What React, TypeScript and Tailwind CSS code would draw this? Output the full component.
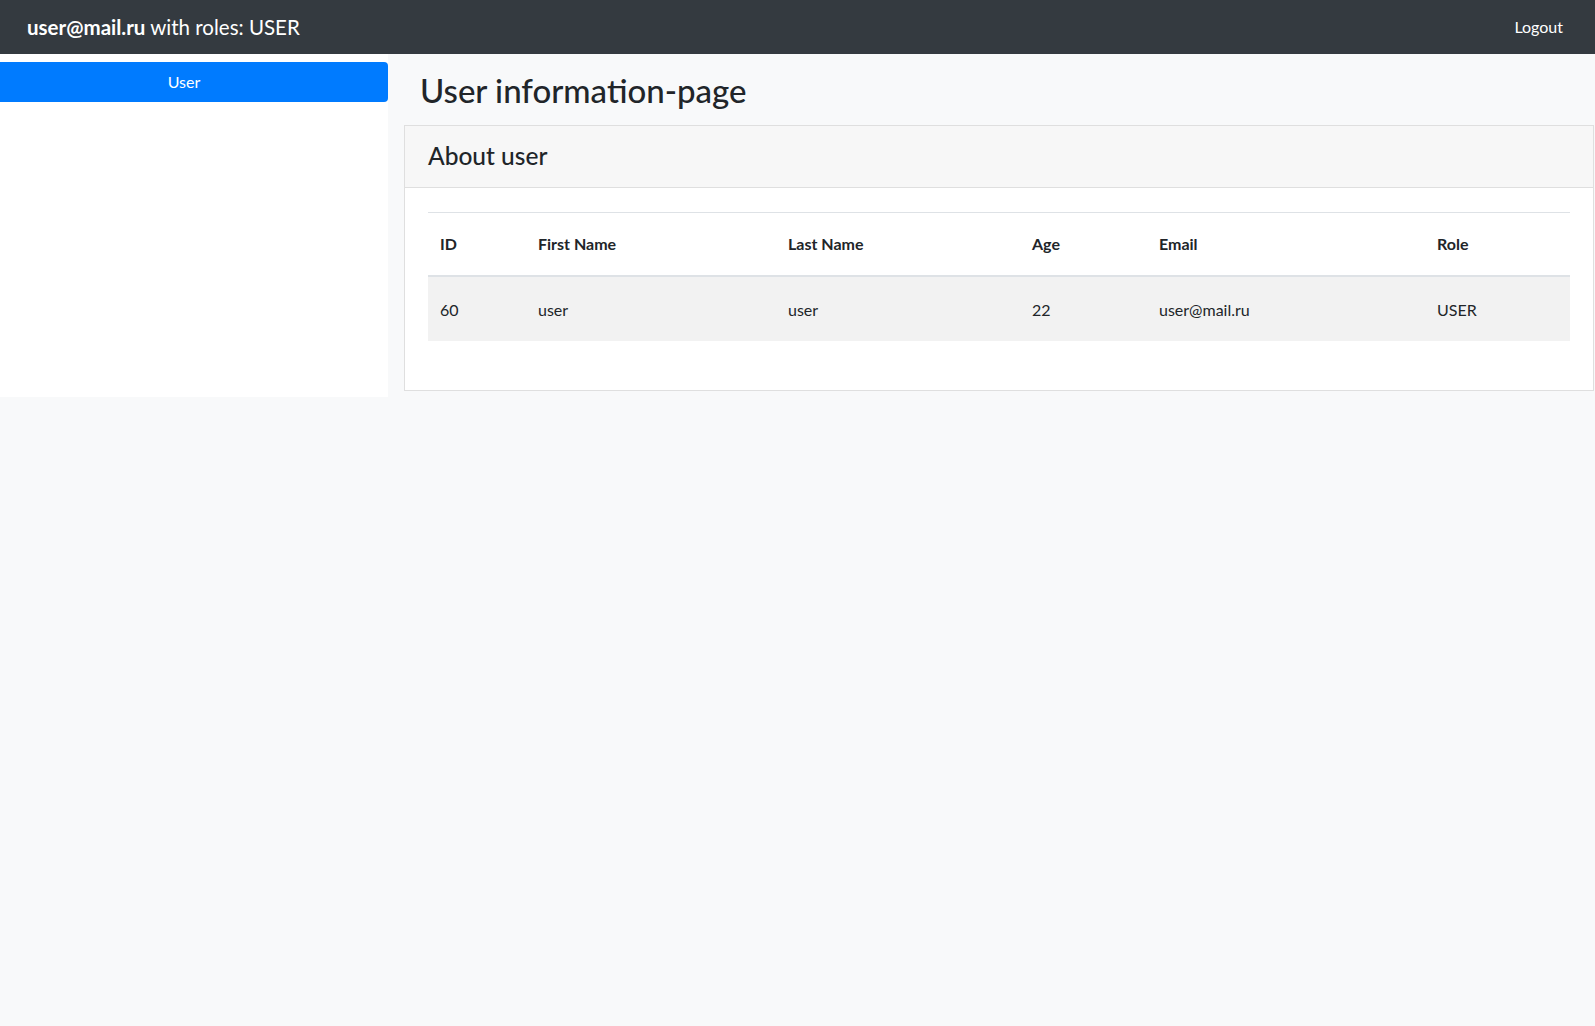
import React from 'react';

const font = { fontFamily: 'Lato, "Noto Sans", sans-serif' };

const columns = [
  { label: 'ID', width: 'w-[98px]' },
  { label: 'First Name', width: 'w-[250px]' },
  { label: 'Last Name', width: 'w-[244px]' },
  { label: 'Age', width: 'w-[127px]' },
  { label: 'Email', width: 'w-[278px]' },
  { label: 'Role', width: 'w-[145px]' },
];

const rows = [['60', 'user', 'user', '22', 'user@mail.ru', 'USER']];

export default function App() {
  return (
    <div className="min-h-screen bg-[#f8f9fa] text-[#212529]" style={font}>
      <nav className="flex h-[54px] items-center justify-between bg-[#343a40] pl-[27px] pr-[32px] text-white">
        <div className="text-[20.5px]">
          <span className="font-bold">user@mail.ru</span> with roles: USER
        </div>
        <a href="#" className="text-[16px] text-white">
          Logout
        </a>
      </nav>

      <div className="flex">
        <aside className="w-[388px] bg-white pt-2">
          <button className="flex h-10 w-full items-center justify-center rounded-r-[4px] bg-[#007bff] pr-5 text-[16px] text-white">
            User
          </button>
        </aside>

        <main className="flex-1 pl-4 pr-px pt-[17px] pb-[6px]">
          <h1 className="pl-4 text-[33px] font-medium leading-[1.2]">User information-page</h1>

          <div className="mt-[14px] border border-[#dfdfdf] bg-white">
            <div className="flex h-[62px] items-center border-b border-[#dfdfdf] bg-[#f7f7f7] px-[23px]">
              <h4 className="text-[24.5px] font-medium leading-[1.2]">About user</h4>
            </div>
            <div className="px-[23px] pt-[24px] pb-[49px]">
              <table className="w-full table-fixed border-collapse text-[16px]">
                <thead>
                  <tr className="h-[64px] border-t border-b-2 border-[#dee2e6]">
                    {columns.map((c) => (
                      <th key={c.label} className={`${c.width} px-3 text-left font-bold`}>
                        {c.label}
                      </th>
                    ))}
                  </tr>
                </thead>
                <tbody>
                  {rows.map((r, i) => (
                    <tr key={i} className="h-[65px] bg-[#f2f2f2]">
                      {r.map((cell, j) => (
                        <td key={j} className="px-3 pt-[2px]">
                          {cell}
                        </td>
                      ))}
                    </tr>
                  ))}
                </tbody>
              </table>
            </div>
          </div>
        </main>
      </div>
    </div>
  );
}
